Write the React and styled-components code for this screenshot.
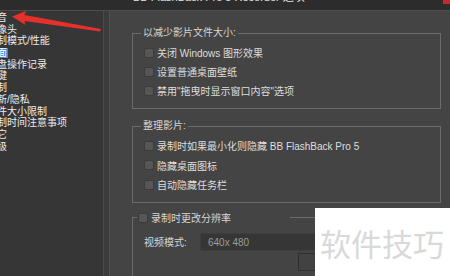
import React from 'react'
import styled, { createGlobalStyle } from 'styled-components'

const GlobalStyle = createGlobalStyle`
  html, body { margin: 0; padding: 0; background: #444; }
  * { box-sizing: border-box; }
`

const font = `"Liberation Sans", "Noto Sans CJK SC", sans-serif`

const Window = styled.div`
  position: relative;
  width: 450px;
  height: 276px;
  overflow: hidden;
  display: flex;
  flex-direction: column;
  background: #444444;
  font-family: ${font};
  font-size: 10px;
  color: #dedede;
`

const TitleBar = styled.div`
  height: 11px;
  flex-shrink: 0;
  background: #2c2c2c;
  border-bottom: 1px solid #4d4d4d;
  overflow: hidden;
  display: flex;
  padding-left: 133px;
`

const TitleText = styled.div`
  font-size: 11px;
  line-height: 12px;
  margin-top: -9px;
  color: #e6e6e6;
`

const CloseDot = styled.div`
  position: absolute;
  right: 0;
  top: 0;
  width: 7px;
  height: 4px;
  background: #c42b2b;
`

const Body = styled.div`
  flex: 1;
  display: flex;
  min-height: 0;
`

const Sidebar = styled.div`
  width: 104px;
  flex-shrink: 0;
  background: #363636;
  border-right: 1px solid #4a4a4a;
  padding-top: 1px;
  overflow: hidden;
`

const Item = styled.div`
  height: 11.7px;
  line-height: 11.7px;
  white-space: nowrap;
  color: #ececec;
`

const ItemText = styled.span`
  display: inline-block;
  margin-left: -13px;
  padding: 0 1px 0 0;
  line-height: 10px;
  background: ${p => (p.$active ? '#3f86cc' : 'transparent')};
  color: ${p => (p.$active ? '#ffffff' : '#ececec')};
`

const Gutter = styled.div`
  width: 6px;
  flex-shrink: 0;
  background: #3c3c3c;
  border-right: 1px solid #505050;
`

const Main = styled.div`
  flex: 1;
  padding: 16px 9px 0 22px;
  display: flex;
  flex-direction: column;
  background: #444444;
`

const Group = styled.fieldset`
  margin: ${p => p.$top || 0}px 0 0 0;
  padding: ${p => p.$pad || '4px 10px 8px 11px'};
  border: 1px solid #6b6b6b;
  min-width: 0;
`

const Legend = styled.legend`
  padding: 0 2px;
  margin-left: -3px;
  line-height: 12px;
  height: 12px;
  color: #d6d6d6;
  white-space: nowrap;
`

const CheckLegend = styled.legend`
  padding: 0 0 0 1px;
  margin-left: -7px;
  width: 153px;
  height: 12px;
  display: flex;
  align-items: center;
  gap: 3px;
  color: #d6d6d6;
  white-space: nowrap;
`

const Row = styled.div`
  height: ${p => p.$h || 19}px;
  display: flex;
  align-items: center;
  gap: 3px;
  white-space: nowrap;
`

const Box = styled.span`
  width: 10px;
  height: 10px;
  flex-shrink: 0;
  background: #565656;
  border: 1px solid #3b3b3b;
  border-radius: 2px;
`

const FieldRow = styled.div`
  height: 18px;
  display: flex;
  align-items: center;
`

const FieldLabel = styled.div`
  width: 56px;
  color: #d6d6d6;
`

const Input = styled.div`
  flex: 1;
  height: 18px;
  line-height: 18px;
  padding-left: 7px;
  background: #363636;
  border: 1px solid #3e3e3e;
  color: #9c9c9c;
`

const Button = styled.div`
  margin: 2px 0 0 154px;
  width: 80px;
  height: 18px;
  background: #424242;
  border: 1px solid #2f2f2f;
`

const Watermark = styled.div`
  position: absolute;
  left: 315px;
  top: 208px;
  width: 135px;
  height: 68px;
  background: #ffffff;
  padding: 19px 0 0 5px;
  font-family: "Noto Sans CJK SC", sans-serif;
  font-size: 31px;
  line-height: 31px;
  color: #d9d9d9;
  white-space: nowrap;
`

const Arrow = styled.svg`
  position: absolute;
  left: 0;
  top: 0;
`

const items = [
  '声音', '摄像头', '录制模式/性能', '桌面', '键盘操作记录', '热键',
  '录制', '更新/隐私', '文件大小限制', '录制时间注意事项', '其它', '高级',
]

const Check = ({ children }) => (
  <Row>
    <Box />
    <span>{children}</span>
  </Row>
)

export default function App() {
  return (
    <Window>
      <GlobalStyle />
      <TitleBar>
        <TitleText>BB FlashBack Pro 5 Recorder 选项</TitleText>
      </TitleBar>
      <CloseDot />
      <Body>
        <Sidebar>
          {items.map(t => (
            <Item key={t}>
              <ItemText $active={t === '桌面'}>{t}</ItemText>
            </Item>
          ))}
        </Sidebar>
        <Gutter />
        <Main>
          <Group>
            <Legend>以减少影片文件大小:</Legend>
            <Check>关闭 Windows 图形效果</Check>
            <Check>设置普通桌面壁纸</Check>
            <Check>禁用"拖曳时显示窗口内容"选项</Check>
          </Group>
          <Group $top={11} $pad="4px 10px 7px 11px">
            <Legend>整理影片:</Legend>
            <Row $h={19.5}><Box /><span>录制时如果最小化则隐藏 BB FlashBack Pro 5</span></Row>
            <Row $h={19.5}><Box /><span>隐藏桌面图标</span></Row>
            <Row $h={19.5}><Box /><span>自动隐藏任务栏</span></Row>
          </Group>
          <Group $top={9} $pad="9px 10px 8px 11px">
            <CheckLegend><Box />录制时更改分辨率</CheckLegend>
            <FieldRow>
              <FieldLabel>视频模式:</FieldLabel>
              <Input>640x 480</Input>
            </FieldRow>
            <Button />
          </Group>
        </Main>
      </Body>
      <Watermark>软件技巧</Watermark>
      <Arrow width="110" height="36" viewBox="0 0 110 36">
        <polygon
          points="12,16.5 26,11 24.5,15 101,29 100,31.5 24.5,21 25.5,25"
          fill="#e5302c"
        />
      </Arrow>
    </Window>
  )
}
